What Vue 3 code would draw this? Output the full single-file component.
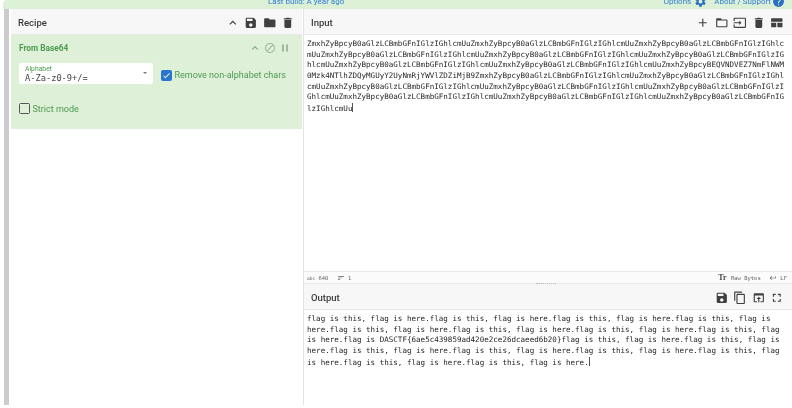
<script setup>
const p = {
  up: 'M7.41 15.41L12 10.83l4.59 4.58L18 14l-6-6-6 6z',
  save: 'M17 3H5c-1.11 0-2 .9-2 2v14c0 1.1.89 2 2 2h14c1.1 0 2-.9 2-2V7l-4-4zm-5 16c-1.66 0-3-1.34-3-3s1.34-3 3-3 3 1.34 3 3-1.34 3-3 3zm3-10H5V5h10v4z',
  folder: 'M10 4H4c-1.1 0-1.99.9-1.99 2L2 18c0 1.1.9 2 2 2h16c1.1 0 2-.9 2-2V8c0-1.1-.9-2-2-2h-8l-2-2z',
  open: 'M20 6h-8l-2-2H4c-1.1 0-1.99.9-1.99 2L2 18c0 1.1.9 2 2 2h16c1.1 0 2-.9 2-2V8c0-1.1-.9-2-2-2zm0 12H4V8h16v10z',
  trash: 'M6 19c0 1.1.9 2 2 2h8c1.1 0 2-.9 2-2V7H6v12zM19 4h-3.5l-1-1h-5l-1 1H5v2h14V4z',
  add: 'M19 13h-6v6h-2v-6H5v-2h6V5h2v6h6v2z',
  input: 'M21 3.01H3c-1.1 0-2 .9-2 2V9h2V4.99h18v14.03H3V15H1v4.01c0 1.1.9 1.98 2 1.98h18c1.1 0 2-.88 2-1.98v-14c0-1.11-.9-2-2-2zM11 16l4-4-4-4v3H1v2h10v3z',
  layout: 'M3 4h18c.6 0 1 .4 1 1v5H2V5c0-.6.4-1 1-1zM2 12h9v8H3c-.6 0-1-.4-1-1zM13 12h9v7c0 .6-.4 1-1 1h-8z',
  copy: 'M16 1H4c-1.1 0-2 .9-2 2v14h2V3h12V1zm3 4H8c-1.1 0-2 .9-2 2v14c0 1.1.9 2 2 2h11c1.1 0 2-.9 2-2V7c0-1.1-.9-2-2-2zm0 16H8V7h11v14z',
  browser: 'M19 4H5c-1.11 0-2 .9-2 2v12c0 1.1.89 2 2 2h4v-2H5V8h14v10h-4v2h4c1.1 0 2-.9 2-2V6c0-1.1-.89-2-2-2zm-7 6l-4 4h3v6h2v-6h3l-4-4z',
  full: 'M7 14H5v5h5v-2H7v-3zm-2-4h2V7h3V5H5v5zm12 7h-3v2h5v-5h-2v3zM14 5v2h3v3h2V5h-5z',
  gear: 'M19.14 12.94c.04-.3.06-.61.06-.94 0-.32-.02-.64-.07-.94l2.03-1.58c.18-.14.23-.41.12-.61l-1.92-3.32c-.12-.22-.37-.29-.59-.22l-2.39.96c-.5-.38-1.03-.7-1.62-.94l-.36-2.54c-.04-.24-.24-.41-.48-.41h-3.84c-.24 0-.43.17-.47.41l-.36 2.54c-.59.24-1.13.57-1.62.94l-2.39-.96c-.22-.08-.47 0-.59.22L2.74 8.87c-.12.21-.08.47.12.61l2.03 1.58c-.05.3-.09.63-.09.94s.02.64.07.94l-2.03 1.58c-.18.14-.23.41-.12.61l1.92 3.32c.12.22.37.29.59.22l2.39-.96c.5.38 1.03.7 1.62.94l.36 2.54c.05.24.24.41.48.41h3.84c.24 0 .44-.17.47-.41l.36-2.54c.59-.24 1.13-.56 1.62-.94l2.39.96c.22.08.47 0 .59-.22l1.92-3.32c.12-.22.07-.47-.12-.61l-2.01-1.58zM12 15.6c-1.98 0-3.6-1.62-3.6-3.6s1.62-3.6 3.6-3.6 3.6 1.62 3.6 3.6-1.62 3.6-3.6 3.6z',
  help: 'M12 2C6.48 2 2 6.48 2 12s4.48 10 10 10 10-4.48 10-10S17.52 2 12 2zm1 17h-2v-2h2v2zm2.07-7.75l-.9.92C13.45 12.9 13 13.5 13 15h-2v-.5c0-1.1.45-2.1 1.17-2.83l1.24-1.26c.37-.36.59-.86.59-1.41 0-1.1-.9-2-2-2s-2 .9-2 2H8c0-2.21 1.79-4 4-4s4 1.79 4 4c0 .88-.36 1.68-.93 2.25z',
  ban: 'M12 2C6.48 2 2 6.48 2 12s4.48 10 10 10 10-4.48 10-10S17.52 2 12 2zM4 12c0-4.42 3.58-8 8-8 1.85 0 3.55.63 4.9 1.69L5.69 16.9C4.63 15.55 4 13.85 4 12zm8 8c-1.85 0-3.55-.63-4.9-1.69L18.31 7.1C19.37 8.45 20 10.15 20 12c0 4.42-3.58 8-8 8z',
  pause: 'M6 19h4V5H6v14zm8-14v14h4V5h-4z',
  check: 'M9 16.2L4.8 12l-1.4 1.4L9 19 21 7l-1.4-1.4z',
  sort: 'M3 18h6v-2H3v2zM3 6v2h18V6H3zm0 7h12v-2H3v2z',
  ret: 'M19 7v4H5.83l3.58-3.59L8 6l-6 6 6 6 1.41-1.41L5.83 13H21V7z'
}
const recipeIcons = [p.up, p.save, p.folder, p.trash]
const opIcons = [p.up, p.ban, p.pause]
const inputIcons = [p.add, p.open, p.input, p.trash, p.layout]
const outputIcons = [p.save, p.copy, p.browser, p.full]

const inputText = [
  'ZmxhZyBpcyB0aGlzLCBmbGFnIGlzIGhlcmUuZmxhZyBpcyB0aGlzLCBmbGFnIGlzIGhlcmUuZmxhZyBpcyB0aGlzLCBmbGFnIGlzIGhlc',
  'mUuZmxhZyBpcyB0aGlzLCBmbGFnIGlzIGhlcmUuZmxhZyBpcyB0aGlzLCBmbGFnIGlzIGhlcmUuZmxhZyBpcyB0aGlzLCBmbGFnIGlzIG',
  'hlcmUuZmxhZyBpcyB0aGlzLCBmbGFnIGlzIGhlcmUuZmxhZyBpcyB0aGlzLCBmbGFnIGlzIGhlcmUuZmxhZyBpcyBEQVNDVEZ7NmFlNWM',
  '0Mzk4NTlhZDQyMGUyY2UyNmRjYWVlZDZiMjB9ZmxhZyBpcyB0aGlzLCBmbGFnIGlzIGhlcmUuZmxhZyBpcyB0aGlzLCBmbGFnIGlzIGhl',
  'cmUuZmxhZyBpcyB0aGlzLCBmbGFnIGlzIGhlcmUuZmxhZyBpcyB0aGlzLCBmbGFnIGlzIGhlcmUuZmxhZyBpcyB0aGlzLCBmbGFnIGlzI',
  'GhlcmUuZmxhZyBpcyB0aGlzLCBmbGFnIGlzIGhlcmUuZmxhZyBpcyB0aGlzLCBmbGFnIGlzIGhlcmUuZmxhZyBpcyB0aGlzLCBmbGFnIG',
  'lzIGhlcmUu'
]
const outputText = [
  'flag is this, flag is here.flag is this, flag is here.flag is this, flag is here.flag is this, flag is',
  'here.flag is this, flag is here.flag is this, flag is here.flag is this, flag is here.flag is this, flag',
  'is here.flag is DASCTF{6ae5c439859ad420e2ce26dcaeed6b20}flag is this, flag is here.flag is this, flag is',
  'here.flag is this, flag is here.flag is this, flag is here.flag is this, flag is here.flag is this, flag',
  'is here.flag is this, flag is here.flag is this, flag is here.'
]
</script>

<template>
  <div class="page">
    <div class="banner">
      <span class="build">Last build: A year ago</span>
      <span class="links">
        <span>Options</span>
        <svg class="ico-top gear" viewBox="0 0 24 24"><path :d="p.gear" /></svg>
        <span class="about">About / Support</span>
        <svg class="ico-top help" viewBox="0 0 24 24"><path :d="p.help" /></svg>
      </span>
    </div>
    <div class="workspace">
      <div class="strip"></div>
      <section class="recipe">
        <header class="head">
          <h2>Recipe</h2>
          <div class="tools recipe-tools">
            <svg v-for="(d, i) in recipeIcons" :key="i" viewBox="0 0 24 24"><path :d="d" /></svg>
          </div>
        </header>
        <div class="op">
          <div class="op-top">
            <h3>From Base64</h3>
            <div class="op-tools">
              <svg v-for="(d, i) in opIcons" :key="i" viewBox="0 0 24 24"><path :d="d" /></svg>
            </div>
          </div>
          <div class="op-row">
            <div class="field">
              <label>Alphabet</label>
              <div class="value">A-Za-z0-9+/=</div>
              <span class="drop"></span>
            </div>
            <div class="chk-row">
              <span class="box on"><svg viewBox="0 0 24 24"><path :d="p.check" /></svg></span>
              <span>Remove non-alphabet chars</span>
            </div>
          </div>
          <div class="chk-row strict">
            <span class="box"></span>
            <span>Strict mode</span>
          </div>
        </div>
      </section>
      <div class="right">
        <header class="head io-head">
          <h2>Input</h2>
          <div class="tools">
            <svg v-for="(d, i) in inputIcons" :key="i" viewBox="0 0 24 24"><path :d="d" /></svg>
          </div>
        </header>
        <div class="text input-text">
          <div v-for="(l, i) in inputText" :key="i">{{ l }}<span v-if="i === inputText.length - 1" class="caret"></span></div>
        </div>
        <div class="status">
          <span class="s-left"><span class="abc">abc</span> 640
            <svg viewBox="0 0 24 24"><path :d="p.sort" /></svg> 1</span>
          <span class="s-right"><b>Tr</b> Raw Bytes
            <svg viewBox="0 0 24 24"><path :d="p.ret" /></svg> LF</span>
          <i class="grip"></i>
        </div>
        <header class="head io-head">
          <h2>Output</h2>
          <div class="tools">
            <svg v-for="(d, i) in outputIcons" :key="i" viewBox="0 0 24 24"><path :d="d" /></svg>
          </div>
        </header>
        <div class="text output-text">
          <div v-for="(l, i) in outputText" :key="i">{{ l }}<span v-if="i === outputText.length - 1" class="caret"></span></div>
        </div>
      </div>
    </div>
  </div>
</template>

<style>
html, body { margin: 0; background: #fff; }
</style>

<style scoped>
.page {
  width: 792px;
  height: 408px;
  overflow: hidden;
  display: flex;
  flex-direction: column;
  background: #fff;
  font-family: Roboto, "Liberation Sans", sans-serif;
  color: #444;
  filter: blur(0.3px);
}
.banner {
  height: 9px;
  flex: none;
  margin-left: 3px;
  background: #dcf0d6;
  border-top-left-radius: 4px;
  display: flex;
  justify-content: space-between;
  align-items: flex-end;
  overflow: hidden;
  padding: 0 7px 0 265px;
  color: #2f7fd6;
  font-size: 8px;
  line-height: 11px;
}
.build { margin-bottom: 2px; }
.links { display: flex; align-items: center; margin-bottom: 1px; flex: none; }
.about { margin-left: 7.5px; }
.ico-top { width: 13px; height: 13px; fill: #2a6fc4; flex: none; }
.gear { margin-left: 2.5px; }
.help { margin-left: 1px; }
.workspace { flex: none; height: 396px; display: flex; }
.strip { flex: none; width: 5px; margin: 0 2px 0 4px; background: #cccccc; }
.recipe { flex: none; width: 291px; display: flex; flex-direction: column; background: #fff; }
.head {
  flex: none;
  height: 26px;
  box-sizing: border-box;
  display: flex;
  align-items: center;
  justify-content: space-between;
  padding: 2px 0 0 7px;
  background: #f7f7f7;
  border-bottom: 1px solid #e8e8e8;
}
h2 { margin: 0; font-size: 9.5px; font-weight: 500; color: #3c3c3c; }
.tools { display: flex; gap: 4.9px; padding-right: 8px; }
.tools svg { width: 13.6px; height: 13.6px; fill: #404040; }
.recipe-tools { padding-right: 7px; }
.op { height: 94px; box-sizing: border-box; padding: 7px 8px 0; background: #dff0d9; color: #4d9a50; }
.op-top { display: flex; justify-content: space-between; align-items: center; height: 12px; }
h3 { margin: 0; font-size: 8.3px; font-weight: 700; color: #4d9a50; }
.op-tools { display: flex; gap: 3px; margin-right: 3px; }
.op-tools svg { width: 12px; height: 12px; fill: #9fb89c; }
.op-tools svg:first-child { fill: #6fa772; }
.op-row { display: flex; align-items: center; margin-top: 9px; }
.field {
  position: relative;
  width: 134px;
  height: 21px;
  box-sizing: border-box;
  padding: 3px 6px 0;
  background: #fff;
  border-radius: 2px;
}
.field label { display: block; font-size: 6.8px; line-height: 7px; color: #4d9a50; }
.value { font-family: "DejaVu Sans Mono", "Liberation Mono", monospace; font-size: 8.7px; line-height: 10px; color: #444; }
.drop {
  position: absolute;
  right: 6px;
  top: 9px;
  border-left: 2px solid transparent;
  border-right: 2px solid transparent;
  border-top: 2px solid #777;
}
.chk-row { display: flex; align-items: center; gap: 2.5px; font-size: 9px; color: #4d9a50; }
.op-row .chk-row { margin: 3px 0 0 8px; }
.strict { margin-top: 19px; }
.box { width: 11px; height: 11px; box-sizing: border-box; border: 1px solid #555; border-radius: 1.5px; flex: none; display: flex; }
.box.on { background: #2a75d0; border-color: #2a75d0; }
.box svg { fill: #fff; width: 100%; height: 100%; }
.right {
  flex: 1;
  min-width: 0;
  display: flex;
  flex-direction: column;
  margin-left: 1px;
  border-left: 1px solid #e4e4e4;
}
.text {
  font-family: "DejaVu Sans Mono", "Liberation Mono", monospace;
  font-size: 7.55px;
  line-height: 10.62px;
  color: #1f1f1f;
  white-space: pre;
  padding: 4px 0 0 3px;
  overflow: hidden;
}
.input-text { height: 236px; box-sizing: border-box; flex: none; }
.output-text { flex: 1; }
.caret { display: inline-block; width: 1px; height: 9px; background: #555; vertical-align: -1.5px; }
.status {
  position: relative;
  flex: none;
  height: 13px;
  box-sizing: border-box;
  display: flex;
  align-items: center;
  justify-content: space-between;
  padding: 0 5px 0 3px;
  background: #fbfbfb;
  border-top: 1px solid #e8e8e8;
  border-bottom: 1px solid #e8e8e8;
  font-family: "DejaVu Sans Mono", monospace;
  font-size: 5.5px;
  color: #666;
}
.status svg { width: 8px; height: 8px; fill: #666; vertical-align: -2px; margin-left: 5px; }
.s-right b { font-family: "Liberation Serif", serif; font-size: 8px; color: #444; margin-right: 1px; }
.abc { font-size: 4.5px; }
.grip {
  position: absolute;
  left: 232px;
  bottom: -1px;
  width: 20px;
  border-bottom: 1px dotted #bbb;
}
</style>
